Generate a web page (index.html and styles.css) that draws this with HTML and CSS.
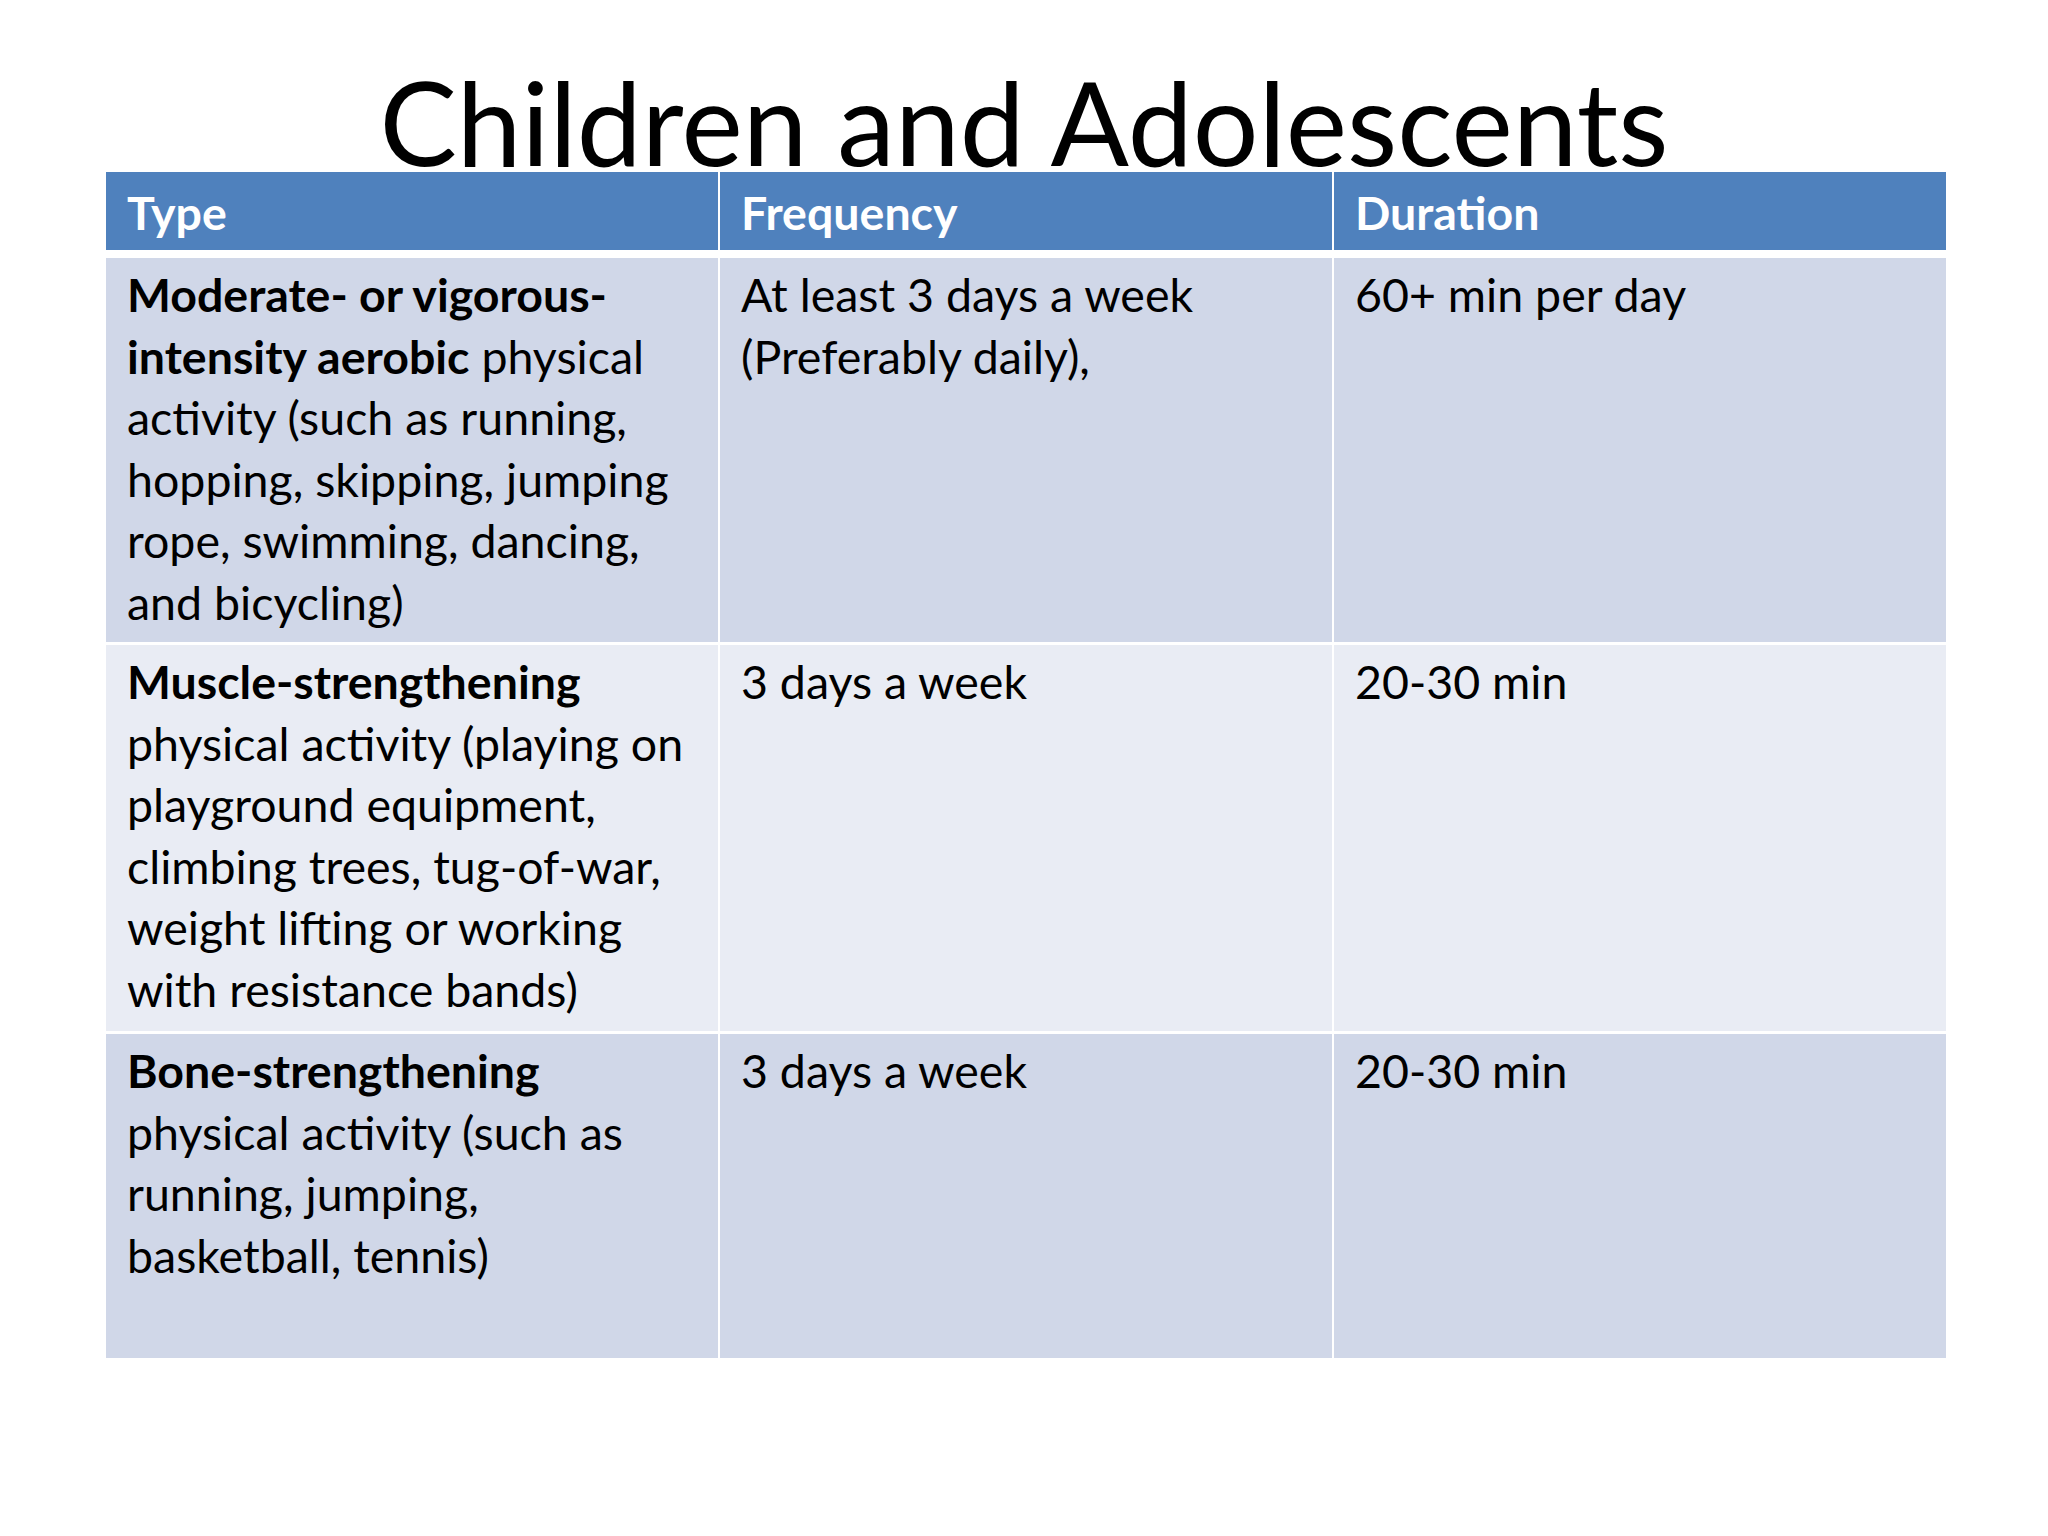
FILE: index.html
```html
<!DOCTYPE html>
<html lang="en">
<head>
<meta charset="utf-8">
<title>Children and Adolescents</title>
<link rel="stylesheet" href="styles.css">
</head>
<body>
<div class="slide">
  <div class="title">Children and Adolescents</div>
  <div class="table">
    <div class="cell head">Type</div>
    <div class="cell head">Frequency</div>
    <div class="cell head">Duration</div>

    <div class="cell band"><b>Moderate- or vigorous-</b><br><b>intensity aerobic</b> physical<br>activity (such as running,<br>hopping, skipping, jumping<br>rope, swimming, dancing,<br>and bicycling)</div>
    <div class="cell band">At least 3 days a week<br>(Preferably daily),</div>
    <div class="cell band">60+ min per day</div>

    <div class="cell light"><b>Muscle-strengthening</b><br>physical activity (playing on<br>playground equipment,<br>climbing trees, tug-of-war,<br>weight lifting or working<br>with resistance bands)</div>
    <div class="cell light">3 days a week</div>
    <div class="cell light">20-30 min</div>

    <div class="cell band"><b>Bone-strengthening</b><br>physical activity (such as<br>running, jumping,<br>basketball, tennis)</div>
    <div class="cell band">3 days a week</div>
    <div class="cell band">20-30 min</div>
  </div>
</div>
</body>
</html>
```

FILE: styles.css
```css
html, body {
  margin: 0;
  padding: 0;
  background: #ffffff;
}

.slide {
  width: 2048px;
  height: 1536px;
  font-family: Lato, "Open Sans", sans-serif;
  color: #000000;
}

.title {
  height: 172px;
  display: flex;
  align-items: flex-end;
  justify-content: center;
  font-size: 116px;
  line-height: 100px;
  font-weight: 400;
}

.table {
  margin-left: 106px;
  width: 1840px;
  display: grid;
  grid-template-columns: 612px 612px 612px;
  grid-template-rows: 83px 384px 386px 324px;
  column-gap: 2px;
  row-gap: 3px;
}

.cell {
  box-sizing: border-box;
  padding: 6px 10px 0 21px;
  font-size: 46.5px;
  line-height: 61.5px;
  white-space: nowrap;
}

.cell b {
  font-weight: 700;
}

.head {
  background: #4f81bd;
  color: #ffffff;
  font-weight: 700;
  padding-top: 10px;
  height: 78px;
  align-self: start;
}

.band {
  background: #d0d7e8;
}

.light {
  background: #e9ecf4;
}
```
